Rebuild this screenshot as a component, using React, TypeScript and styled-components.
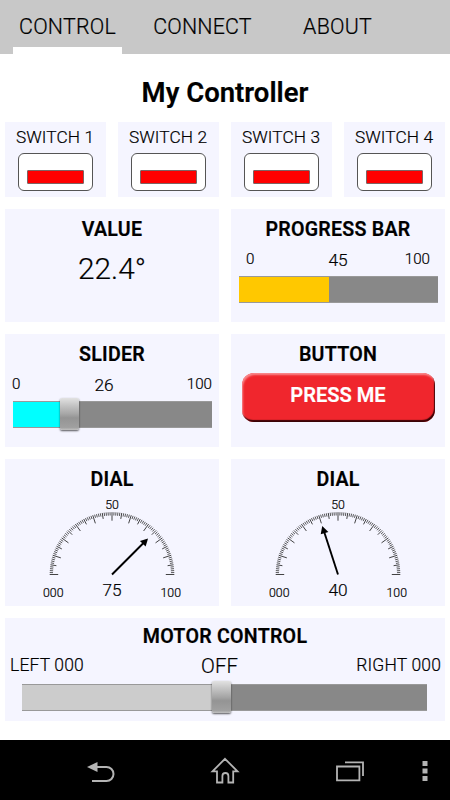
import React from "react";
import styled, { createGlobalStyle } from "styled-components";

const GlobalStyle = createGlobalStyle`
  * { box-sizing: border-box; }
  body { margin: 0; background: #fff; font-family: Roboto, "Liberation Sans", sans-serif; font-weight: 300; -webkit-text-stroke: 0.2px currentColor; color: #000; }
  button { font-family: inherit; }
`;

const Screen = styled.div`
  width: 450px;
  height: 800px;
  display: flex;
  flex-direction: column;
  overflow: hidden;
  background: #fff;
`;

const TabBar = styled.nav`
  height: 54px;
  flex: none;
  display: flex;
  align-items: stretch;
  padding-left: 13px;
  background: #c8c8c8;
`;

const Tab = styled.a<{ $width: number; $active?: boolean }>`
  width: ${(p) => p.$width}px;
  padding-top: 7px;
  border-bottom: 7px solid ${(p) => (p.$active ? "#fff" : "transparent")};
  line-height: 40px;
  font-size: 21.4px;
  letter-spacing: 0.2px;
  text-align: center;
  white-space: nowrap;
`;

const TabGap = styled.span<{ $width: number }>`
  width: ${(p) => p.$width}px;
`;

const Heading = styled.h1`
  margin: 0;
  height: 68px;
  padding-top: 18px;
  line-height: 41px;
  font-size: 27.5px;
  font-weight: 600;
  text-align: center;
  flex: none;
`;

const Panel = styled.main`
  flex: 1;
  min-height: 0;
  padding: 0 5px;
  display: flex;
  flex-direction: column;
  gap: 12.3px;
`;

const Row = styled.div<{ $columns: number; $height: number }>`
  display: grid;
  flex: none;
  grid-template-columns: repeat(${(p) => p.$columns}, 1fr);
  column-gap: 12px;
  height: ${(p) => p.$height}px;
`;

const Card = styled.section`
  display: flex;
  flex-direction: column;
  align-items: center;
  background: #f5f5ff;
  min-width: 0;
`;

const CardTitle = styled.h2<{ $height?: number }>`
  margin: 0;
  height: ${(p) => p.$height ?? 39}px;
  line-height: ${(p) => (p.$height ? p.$height : 41)}px;
  font-size: 19.6px;
  font-weight: 600;
  letter-spacing: 0.25px;
  white-space: nowrap;
`;

const SwitchLabel = styled.span`
  line-height: 31px;
  margin-right: 1px;
  font-size: 17.3px;
  letter-spacing: 0.1px;
  white-space: nowrap;
`;

const SwitchBody = styled.button`
  width: 75px;
  height: 38px;
  padding: 9px 0 0;
  display: flex;
  align-items: center;
  justify-content: center;
  background: #fff;
  border: 1px solid #555;
  border-radius: 6px;
`;

const SwitchLamp = styled.span`
  width: 57px;
  height: 14px;
  border: 1px solid #7c6464;
  border-radius: 1px;
  background: #f00;
`;

const Reading = styled.div`
  line-height: 42px;
  font-size: 29.8px;
`;

const Scale = styled.div<{ $inset: string }>`
  align-self: stretch;
  height: 28px;
  padding: ${(p) => p.$inset};
  display: grid;
  grid-template-columns: 30px 1fr 30px;
  line-height: 22px;
  font-size: 15.2px;
`;

const ScaleValue = styled.span<{ $shift?: number }>`
  line-height: 25px;
  font-size: 17.3px;
  text-align: center;
  padding-right: ${(p) => p.$shift ?? 0}px;
`;

const ScaleEnd = styled.span`
  text-align: right;
`;

const Track = styled.div<{ $width: number; $trail?: number }>`
  position: relative;
  width: ${(p) => p.$width}px;
  height: 27px;
  margin-right: ${(p) => p.$trail ?? 0}px;
  flex: none;
  background: #888;
  border-top: 1px solid #999;
  border-bottom: 1px solid #999;
`;

const TrackFill = styled.div<{ $color: string }>`
  height: 100%;
  background: ${(p) => p.$color};
`;

const Thumb = styled.div`
  position: absolute;
  top: -4px;
  width: 19px;
  height: 32px;
  border-radius: 2px;
  background: linear-gradient(#e2e2e2 0%, #c6c6c6 22%, #a6a6a6 50%, #949494 62%, #a0a0a0 92%, #c0c0c0 100%);
  box-shadow: 0 1px 2px rgba(0, 0, 0, 0.65);
`;

const PressButton = styled.button`
  width: 193px;
  height: 49px;
  padding: 0 0 5px;
  border: 0;
  border-radius: 12px;
  background: #f0262d;
  box-shadow: inset 1px 2px 2px #f98a8d, inset -1px -2px 1px #3a0306;
  color: #fff;
  font-size: 20.1px;
  font-weight: 600;
`;

const DialFace = styled.svg`
  display: block;
  width: 140px;
  height: 66px;
  flex: none;
`;

const DialTop = styled.span`
  height: 14px;
  line-height: 14px;
  font-size: 12.3px;
`;

const DialScale = styled.div`
  width: 138px;
  height: 27px;
  display: grid;
  grid-template-columns: 1fr 1fr 1fr;
  line-height: 30px;
  font-size: 12.3px;
`;

const DialReading = styled.span`
  line-height: 25px;
  font-size: 17.3px;
  text-align: center;
`;

const MotorLabels = styled.div`
  align-self: stretch;
  height: 29px;
  padding: 0 4px 0 5px;
  display: grid;
  grid-template-columns: 191px 36px 1fr;
  line-height: 20px;
  font-size: 17.5px;
  letter-spacing: 0.15px;
  white-space: nowrap;
`;

const MotorState = styled.span`
  line-height: 23px;
  font-size: 20.4px;
`;

const NavBar = styled.footer`
  height: 60px;
  flex: none;
  background: #000;
  display: flex;
  align-items: center;
  padding-top: 2px;
`;

const NavButton = styled.span<{ $left: number }>`
  margin-left: ${(p) => p.$left}px;
  display: flex;
`;

function Switch({ label }: { label: string }) {
  return (
    <Card>
      <SwitchLabel>{label}</SwitchLabel>
      <SwitchBody aria-label={label}>
        <SwitchLamp />
      </SwitchBody>
    </Card>
  );
}

function Dial({ value }: { value: number }) {
  const cx = 70;
  const cy = 62.5;
  const ticks = Array.from({ length: 101 }, (_, i) => {
    const a = Math.PI * (1 - i / 100);
    const len = i % 10 === 0 ? 8.5 : i % 5 === 0 ? 6 : 3.3;
    return (
      <line
        key={i}
        x1={cx + 62.3 * Math.cos(a)}
        y1={cy - 62.3 * Math.sin(a)}
        x2={cx + (62.3 - len) * Math.cos(a)}
        y2={cy - (62.3 - len) * Math.sin(a)}
        strokeWidth={i % 5 === 0 ? 0.85 : 0.75}
      />
    );
  });
  return (
    <Card>
      <CardTitle>DIAL</CardTitle>
      <DialTop>50</DialTop>
      <DialFace viewBox="0 0 140 66">
        <g stroke="#222">{ticks}</g>
        <g transform={`translate(${cx} ${cy}) rotate(${(value / 100) * 180 - 90})`}>
          <path d="M0 0V-47" stroke="#000" strokeWidth="1.9" />
          <path d="M0 -51L4 -43.5H-4Z" />
        </g>
      </DialFace>
      <DialScale>
        <span>000</span>
        <DialReading>{value}</DialReading>
        <ScaleEnd>100</ScaleEnd>
      </DialScale>
    </Card>
  );
}

export default function App() {
  return (
    <Screen>
      <GlobalStyle />
      <TabBar>
        <Tab $width={109} $active>CONTROL</Tab>
        <TabGap $width={26} />
        <Tab $width={109}>CONNECT</Tab>
        <TabGap $width={26} />
        <Tab $width={109}>ABOUT</Tab>
      </TabBar>
      <Heading>My Controller</Heading>
      <Panel>
        <Row $columns={4} $height={75}>
          {[1, 2, 3, 4].map((n) => (
            <Switch key={n} label={`SWITCH ${n}`} />
          ))}
        </Row>
        <Row $columns={2} $height={112.7}>
          <Card>
            <CardTitle>VALUE</CardTitle>
            <Reading>22.4°</Reading>
          </Card>
          <Card>
            <CardTitle>PROGRESS BAR</CardTitle>
            <Scale $inset="0 15px">
              <span>0</span>
              <ScaleValue>45</ScaleValue>
              <ScaleEnd>100</ScaleEnd>
            </Scale>
            <Track $width={199}>
              <TrackFill $color="#ffc800" style={{ width: "45.3%" }} />
            </Track>
          </Card>
        </Row>
        <Row $columns={2} $height={112.7}>
          <Card>
            <CardTitle>SLIDER</CardTitle>
            <Scale $inset="0 7px">
              <span>0</span>
              <ScaleValue $shift={16}>26</ScaleValue>
              <ScaleEnd>100</ScaleEnd>
            </Scale>
            <Track $width={199}>
              <TrackFill $color="#0ff" style={{ width: "26%" }} />
              <Thumb style={{ left: 47 }} />
            </Track>
          </Card>
          <Card>
            <CardTitle>BUTTON</CardTitle>
            <PressButton>PRESS ME</PressButton>
          </Card>
        </Row>
        <Row $columns={2} $height={146.5}>
          <Dial value={75} />
          <Dial value={40} />
        </Row>
        <Row $columns={1} $height={103}>
          <Card>
            <CardTitle $height={37}>MOTOR CONTROL</CardTitle>
            <MotorLabels>
              <span>LEFT 000</span>
              <MotorState>OFF</MotorState>
              <ScaleEnd>RIGHT 000</ScaleEnd>
            </MotorLabels>
            <Track $width={405} $trail={1}>
              <TrackFill $color="#ccc" style={{ width: "48%" }} />
              <Thumb style={{ left: 190 }} />
            </Track>
          </Card>
        </Row>
      </Panel>
      <NavBar>
        <NavButton $left={86}>
          <svg width="29" height="24" viewBox="0 0 29 24" fill="none" stroke="#b4b4b4" strokeWidth="2">
            <path d="M10 8H20.5A6.9 6.9 0 0 1 20.5 22H6" />
            <path d="M1 8L11.5 3V13Z" fill="#b4b4b4" stroke="none" />
          </svg>
        </NavButton>
        <NavButton $left={95}>
          <svg width="30" height="28" viewBox="0 0 30 28" fill="none" stroke="#b4b4b4" strokeWidth="1.8">
            <path d="M15 1.8L27.5 14.3H23.2V25.5H18.4V19A3 3 0 0 0 12.4 19V25.5H7V14.3H2.5Z" />
          </svg>
        </NavButton>
        <NavButton $left={95}>
          <svg width="30" height="22" viewBox="0 0 30 22" fill="none" stroke="#b4b4b4" strokeWidth="1.8">
            <path d="M2 6.5H24.4V20.3H2Z" />
            <path d="M10 2.4H28V16" />
          </svg>
        </NavButton>
        <NavButton $left={57}>
          <svg width="6" height="20" viewBox="0 0 6 20" fill="#b4b4b4">
            <path d="M.5 0H5.5V5H.5ZM.5 7.5H5.5V12.5H.5ZM.5 15H5.5V20H.5Z" />
          </svg>
        </NavButton>
      </NavBar>
    </Screen>
  );
}
